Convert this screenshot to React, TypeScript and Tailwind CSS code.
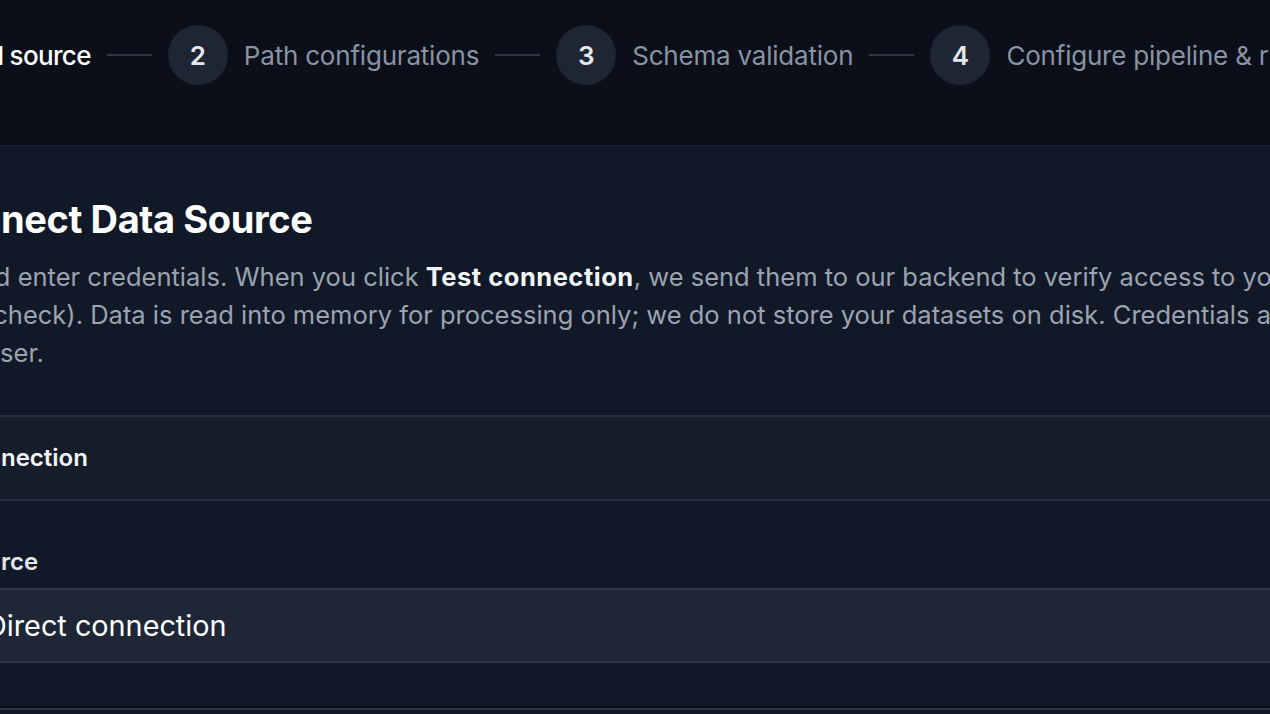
import { Fragment } from "react"

const steps = [
  { n: 1, label: "Original source", active: true },
  { n: 2, label: "Path configurations", active: false },
  { n: 3, label: "Schema validation", active: false },
  { n: 4, label: "Configure pipeline & rules", active: false },
  { n: 5, label: "Review", active: false },
]

export default function App() {
  return (
    <div className="h-screen w-full overflow-hidden bg-[#0b0f19] font-['Inter',sans-serif] antialiased">
      {/* stepper */}
      <div className="flex h-[145px] items-center gap-4 whitespace-nowrap pb-[35px] -ml-[164px]">
        {steps.map((s, i) => (
          <Fragment key={s.n}>
            {i > 0 && <div className="h-[2px] w-[45px] shrink-0 bg-[#2f3746]" />}
            <div className="flex shrink-0 items-center gap-4">
              <div
                className={`flex h-[60px] w-[60px] items-center justify-center rounded-full text-[26px] font-semibold ${
                  s.active ? "bg-[#2563eb] text-white" : "bg-[#1e2533] text-[#e5e7eb]"
                }`}
              >
                {s.n}
              </div>
              <span
                className={`text-[26px] ${
                  s.active ? "font-medium tracking-[-0.025em] text-white" : "tracking-[-0.008em] text-[#8a93a3]"
                }`}
              >
                {s.label}
              </span>
            </div>
          </Fragment>
        ))}
      </div>

      {/* panel */}
      <div className="border-t-2 border-[#1a2130] bg-[#111827]">
        <div className="-ml-[100px] w-[1500px]">
          <div className="pt-[50px]">
            <h1 className="pl-[27px] text-[38px] font-bold leading-[44px] tracking-[-0.01em] text-white">
              Connect Data Source
            </h1>
            <p className="mt-[17px] whitespace-nowrap pl-[24px] text-[25.5px] leading-[38px] text-[#9ba3b1]">
              Go and enter credentials. When you click{" "}
              <span className="font-bold tracking-[0.02em] text-[#f3f4f6]">Test connection</span>, we send them to our
              backend to verify access to your data
              <br />
              (auth check). Data is read into memory for processing only; we do not store your datasets on disk.
              Credentials are only kept for
              <br />
              your user.
            </p>
          </div>

          <div className="mt-[43px] border-y-2 border-[#262e3c] bg-[#151d2b] pl-[54px]">
            <div className="flex h-[82px] items-center text-[24px] font-semibold text-[#f3f4f6]">Connection</div>
          </div>

          <div className="pl-[56px] pt-[43px]">
            <label className="block pb-[8px] text-[24px] font-semibold leading-[36px] text-[#e5e7eb]">Source</label>
          </div>
          <div className="border-y-2 border-[#303848] bg-[#1f2737] pl-[86px]">
            <div className="flex h-[71px] items-center text-[28.8px] text-white">Direct connection</div>
          </div>
          <div className="h-[43px]" />
          <div className="h-[2px] bg-[#0a0e17]" />
          <div className="h-[6px] border-t-2 border-[#2a3140] bg-[#111827]" />
        </div>
      </div>
    </div>
  )
}
